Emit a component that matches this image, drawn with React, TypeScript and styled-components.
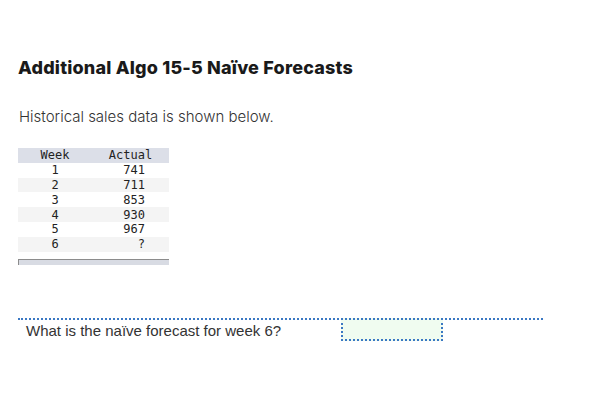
import React from 'react';
import styled, { createGlobalStyle } from 'styled-components';

const GlobalStyle = createGlobalStyle`
  body {
    margin: 0;
    background: #ffffff;
    font-family: 'Inter', 'Liberation Sans', sans-serif;
  }
`;

const Page = styled.div`
  width: 596px;
  height: 418px;
  box-sizing: border-box;
  padding: 55px 18px 0;
`;

const Title = styled.h2`
  margin: 0;
  font-family: 'Inter', sans-serif;
  font-weight: 800;
  font-size: 18px;
  line-height: 26px;
  letter-spacing: 0.2px;
  color: #1a1a1a;
`;

const Intro = styled.p`
  margin: 26px 0 0 1px;
  font-family: 'Inter', sans-serif;
  font-weight: 300;
  font-size: 15px;
  line-height: 20px;
  color: #333333;
`;

const DataTable = styled.table`
  margin-top: 21px;
  width: 151px;
  border-collapse: collapse;
  font-family: 'DejaVu Sans Mono', monospace;
  font-size: 12px;
  color: #222222;
`;

const HeadCell = styled.th<{ $w: number }>`
  background: #dcdfe8;
  font-weight: 400;
  height: 14.8px;
  line-height: 14px;
  padding: 0;
  text-align: center;
  width: ${(p) => p.$w}px;
`;

const Row = styled.tr<{ $shade: boolean }>`
  background: ${(p) => (p.$shade ? '#f4f4f4' : '#ffffff')};
`;

const Cell = styled.td<{ $right?: boolean }>`
  height: 14.8px;
  line-height: 14px;
  padding: 0 ${(p) => (p.$right ? '24px' : '0')} 0 0;
  text-align: ${(p) => (p.$right ? 'right' : 'center')};
`;

const ScrollBar = styled.div`
  margin-top: 7px;
  width: 151px;
  height: 6px;
  box-sizing: border-box;
  background: #d8dbe3;
  border-top: 1px solid #8c8c8c;
  border-left: 1px solid #8c8c8c;
`;

const Question = styled.div`
  margin-top: 53px;
  width: 525px;
  border-top: 2px dotted #3a78c3;
  display: flex;
  align-items: flex-start;
`;

const Prompt = styled.span`
  padding: 2px 0 0 8px;
  width: 315px;
  font-family: 'Liberation Sans', Arial, sans-serif;
  font-size: 15px;
  line-height: 18px;
  color: #333333;
`;

const AnswerBox = styled.div`
  margin-top: -2px;
  width: 102px;
  height: 23px;
  box-sizing: border-box;
  border: 2px dotted #3a78c3;
  background: #f0fcf0;
`;

const rows = [
  ['1', '741'],
  ['2', '711'],
  ['3', '853'],
  ['4', '930'],
  ['5', '967'],
  ['6', '?'],
];

const App = () => (
  <Page>
    <GlobalStyle />
    <Title>Additional Algo 15-5 Naïve Forecasts</Title>
    <Intro>Historical sales data is shown below.</Intro>
    <DataTable>
      <thead>
        <tr>
          <HeadCell $w={74}>Week</HeadCell>
          <HeadCell $w={77}>Actual</HeadCell>
        </tr>
      </thead>
      <tbody>
        {rows.map(([week, actual], i) => (
          <Row key={week} $shade={i % 2 === 1}>
            <Cell>{week}</Cell>
            <Cell $right>{actual}</Cell>
          </Row>
        ))}
      </tbody>
    </DataTable>
    <ScrollBar />
    <Question>
      <Prompt>What is the naïve forecast for week 6?</Prompt>
      <AnswerBox />
    </Question>
  </Page>
);

export default App;
